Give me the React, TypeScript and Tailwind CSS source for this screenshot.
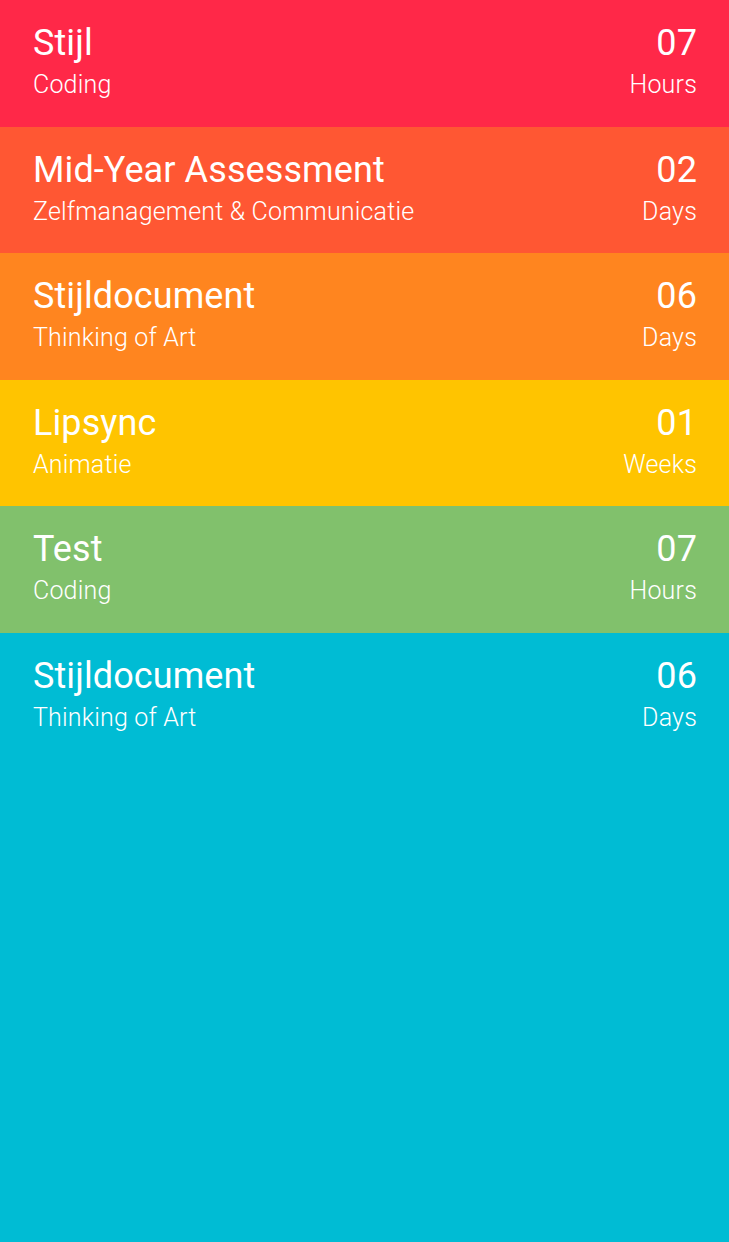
// Deadline list screen
const items = [
  { title: "Stijl", subject: "Coding", count: "07", unit: "Hours", color: "bg-[#ff2848]" },
  {
    title: "Mid-Year Assessment",
    subject: "Zelfmanagement & Communicatie",
    count: "02",
    unit: "Days",
    color: "bg-[#ff5733]",
  },
  { title: "Stijldocument", subject: "Thinking of Art", count: "06", unit: "Days", color: "bg-[#ff851f]" },
  { title: "Lipsync", subject: "Animatie", count: "01", unit: "Weeks", color: "bg-[#ffc400]" },
  { title: "Test", subject: "Coding", count: "07", unit: "Hours", color: "bg-[#81c16c]" },
];

function Row({ item, grow }: { item: (typeof items)[number]; grow?: boolean }) {
  return (
    <div
      className={`flex justify-between pl-[33px] pr-[32px] pt-[22px] text-white ${item.color} ${
        grow ? "flex-1" : "h-[126.5px] shrink-0"
      }`}
    >
      <div className="flex flex-col">
        <span className="text-[36px] leading-[42px] font-normal tracking-[0.1px]">{item.title}</span>
        <span className="mt-[6px] text-[25px] leading-[29px] font-light tracking-[0.18px]">{item.subject}</span>
      </div>
      <div className="flex flex-col items-end">
        <span className="text-[36px] leading-[42px] font-normal tracking-[0.1px]">{item.count}</span>
        <span className="mt-[6px] text-[25px] leading-[29px] font-light tracking-[0.18px]">{item.unit}</span>
      </div>
    </div>
  );
}

export default function App() {
  return (
    <div className="flex h-[1242px] w-full flex-col font-['Roboto',sans-serif] bg-[#00bcd4]">
      {items.map((item, i) => (
        <Row key={i} item={item} />
      ))}
      <Row
        grow
        item={{ title: "Stijldocument", subject: "Thinking of Art", count: "06", unit: "Days", color: "bg-[#00bcd4]" }}
      />
    </div>
  );
}
